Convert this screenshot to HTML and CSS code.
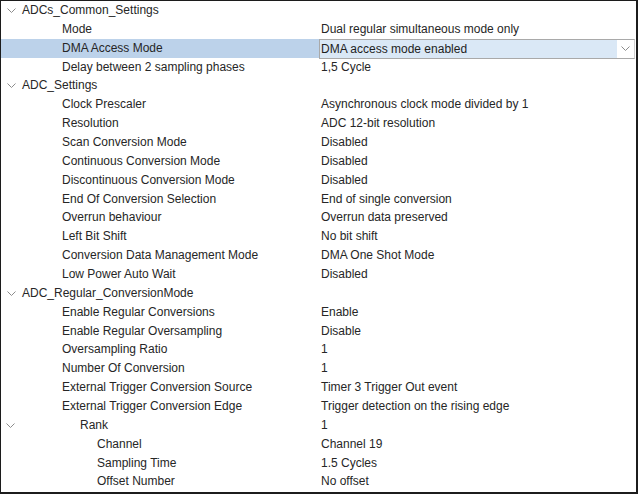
FILE: index.html
```html
<!DOCTYPE html>
<html lang="en">
<head>
  <meta charset="UTF-8">
  <title>ADC Parameter Settings</title>
  <link rel="stylesheet" href="styles.css">
</head>
<body>
  <div class="panel">
    <div class="row">
      <div class="name group"><svg class="toggle" viewBox="0 0 9 6"><polyline points="0.5,0.5 4.5,4.5 8.5,0.5"/></svg>ADCs_Common_Settings</div>
      <div class="value"></div>
    </div>
    <div class="row">
      <div class="name lvl1">Mode</div>
      <div class="value">Dual regular simultaneous mode only</div>
    </div>
    <div class="row selected">
      <div class="name lvl1">DMA Access Mode</div>
      <div class="value">
        <div class="combo">
          <span class="combo-text">DMA access mode enabled</span>
          <span class="combo-btn"><svg viewBox="0 0 9 6"><polyline points="0.5,0.5 4.5,4.5 8.5,0.5"/></svg></span>
        </div>
      </div>
    </div>
    <div class="row">
      <div class="name lvl1">Delay between 2 sampling phases</div>
      <div class="value">1,5 Cycle</div>
    </div>

    <div class="row">
      <div class="name group"><svg class="toggle" viewBox="0 0 9 6"><polyline points="0.5,0.5 4.5,4.5 8.5,0.5"/></svg>ADC_Settings</div>
      <div class="value"></div>
    </div>
    <div class="row"><div class="name lvl1">Clock Prescaler</div><div class="value">Asynchronous clock mode divided by 1</div></div>
    <div class="row"><div class="name lvl1">Resolution</div><div class="value">ADC 12-bit resolution</div></div>
    <div class="row"><div class="name lvl1">Scan Conversion Mode</div><div class="value">Disabled</div></div>
    <div class="row"><div class="name lvl1">Continuous Conversion Mode</div><div class="value">Disabled</div></div>
    <div class="row"><div class="name lvl1">Discontinuous Conversion Mode</div><div class="value">Disabled</div></div>
    <div class="row"><div class="name lvl1">End Of Conversion Selection</div><div class="value">End of single conversion</div></div>
    <div class="row"><div class="name lvl1">Overrun behaviour</div><div class="value">Overrun data preserved</div></div>
    <div class="row"><div class="name lvl1">Left Bit Shift</div><div class="value">No bit shift</div></div>
    <div class="row"><div class="name lvl1">Conversion Data Management Mode</div><div class="value">DMA One Shot Mode</div></div>
    <div class="row"><div class="name lvl1">Low Power Auto Wait</div><div class="value">Disabled</div></div>

    <div class="row">
      <div class="name group"><svg class="toggle" viewBox="0 0 9 6"><polyline points="0.5,0.5 4.5,4.5 8.5,0.5"/></svg>ADC_Regular_ConversionMode</div>
      <div class="value"></div>
    </div>
    <div class="row"><div class="name lvl1">Enable Regular Conversions</div><div class="value">Enable</div></div>
    <div class="row"><div class="name lvl1">Enable Regular Oversampling</div><div class="value">Disable</div></div>
    <div class="row"><div class="name lvl1">Oversampling Ratio</div><div class="value">1</div></div>
    <div class="row"><div class="name lvl1">Number Of Conversion</div><div class="value">1</div></div>
    <div class="row"><div class="name lvl1">External Trigger Conversion Source</div><div class="value">Timer 3 Trigger Out event</div></div>
    <div class="row"><div class="name lvl1">External Trigger Conversion Edge</div><div class="value">Trigger detection on the rising edge</div></div>
    <div class="row">
      <div class="name subgroup"><svg class="toggle" viewBox="0 0 9 6"><polyline points="0.5,0.5 4.5,4.5 8.5,0.5"/></svg><span class="rank">Rank</span></div>
      <div class="value">1</div>
    </div>
    <div class="row"><div class="name lvl2">Channel</div><div class="value">Channel 19</div></div>
    <div class="row"><div class="name lvl2">Sampling Time</div><div class="value">1.5 Cycles</div></div>
    <div class="row"><div class="name lvl2">Offset Number</div><div class="value">No offset</div></div>
  </div>
</body>
</html>
```

FILE: styles.css
```css
:root {
  --row-height: 18.87px;
  --text-color: #262626;
  --select-color: #bcd2ea;
  --combo-color: #dae8f6;
  --combo-border: #a9a9a9;
}

html, body {
  margin: 0;
  padding: 0;
  background: #ffffff;
}

body {
  font-family: 'Liberation Sans', Arial, sans-serif;
  font-size: 12px;
  color: var(--text-color);
}

*, *::before, *::after {
  box-sizing: border-box;
}

.panel {
  width: 638px;
  height: 494px;
  border: 1px solid #1c1c1c;
  border-right-width: 2px;
  border-bottom-width: 2px;
  overflow: hidden;
}

.row {
  display: flex;
  height: var(--row-height);
  line-height: var(--row-height);
}

.name {
  flex: 0 0 318px;
  min-width: 0;
  display: flex;
  align-items: center;
  white-space: nowrap;
  overflow: hidden;
}

.value {
  flex: 1;
  min-width: 0;
  padding-left: 2px;
  white-space: nowrap;
}

.group {
  padding-left: 6px;
}

.lvl1 {
  padding-left: 61px;
}

.lvl2 {
  padding-left: 96px;
}

.subgroup {
  padding-left: 5px;
}

.toggle {
  flex: none;
  width: 9px;
  height: 6px;
  margin-right: 6px;
  margin-top: 1px;
}

.toggle polyline,
.combo-btn polyline {
  fill: none;
  stroke: #8c8c8c;
  stroke-width: 1;
}

.rank {
  padding-left: 59px;
}

/* selected row with inline editor */
.selected .name {
  background: var(--select-color);
}

.selected .value {
  padding-left: 0;
  padding-right: 1px;
}

.combo {
  display: flex;
  height: 20px;
  border: 1px solid var(--combo-border);
  border-right-color: #d0d0d0;
  background: var(--combo-color);
  line-height: 18px;
}

.combo-text {
  flex: 1;
  padding-left: 1px;
  color: #1e1e1e;
}

.combo-btn {
  flex: 0 0 17px;
  display: flex;
  align-items: center;
  justify-content: center;
  background: #ffffff;
}

.combo-btn svg {
  width: 9px;
  height: 6px;
}
```
